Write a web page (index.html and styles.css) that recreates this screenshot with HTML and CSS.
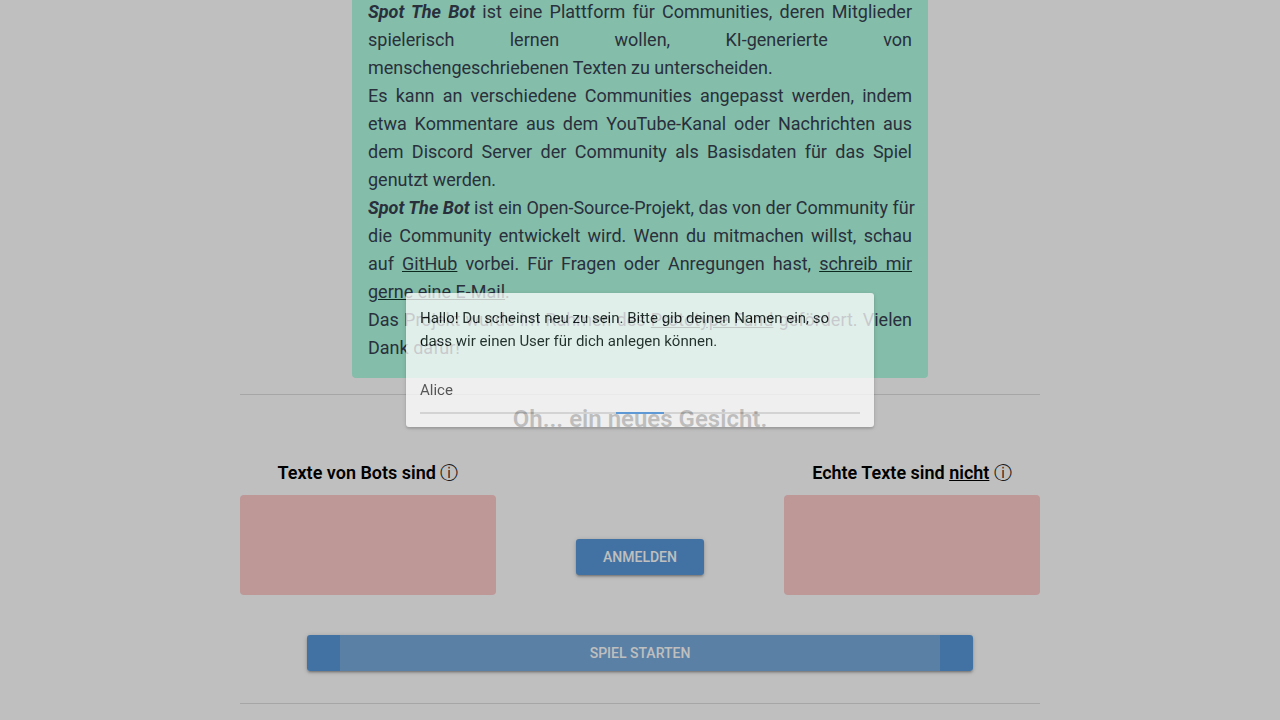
FILE: index.html
```html
<!DOCTYPE html>
<html lang="de">
<head>
<meta charset="utf-8">
<title>Spot The Bot</title>
<link rel="stylesheet" href="styles.css">
</head>
<body>
<main class="page">
  <section class="intro">
    <p><strong class="brand">Spot The Bot</strong> ist eine Plattform für Communities, deren Mitglieder spielerisch lernen wollen, KI-generierte von menschengeschriebenen Texten zu unterscheiden.</p>
    <p>Es kann an verschiedene Communities angepasst werden, indem etwa Kommentare aus dem YouTube-Kanal oder Nachrichten aus dem Discord Server der Community als Basisdaten für das Spiel genutzt werden.</p>
    <p><span class="lead"><strong class="brand">Spot The Bot</strong> ist ein Open-Source-Projekt, das von der Community für</span> die Community entwickelt wird. Wenn du mitmachen willst, schau auf <a href="#">GitHub</a> vorbei. Für Fragen oder Anregungen hast, <a href="#">schreib mir gerne eine E-Mail</a>.</p>
    <p>Das Projekt wurde im Rahmen des <a href="#">Prototype Fund</a> gefördert. Vielen Dank dafür!</p>
  </section>
  <hr class="rule">
  <h1 class="greeting">Oh... ein neues Gesicht.</h1>
  <div class="columns">
    <section class="traits">
      <h2 class="traits-title">Texte von Bots sind <span class="info">ⓘ</span></h2>
      <div class="traits-box"></div>
    </section>
    <button class="button login" type="button">Anmelden</button>
    <section class="traits">
      <h2 class="traits-title">Echte Texte sind <u>nicht</u> <span class="info">ⓘ</span></h2>
      <div class="traits-box"></div>
    </section>
  </div>
  <button class="button start" type="button"><span>Spiel starten</span></button>
  <hr class="rule">
</main>
<div class="backdrop">
  <div class="dialog" role="dialog" aria-modal="true">
    <label class="dialog-text" for="name">Hallo! Du scheinst neu zu sein. Bitte gib deinen Namen ein, so dass wir einen User für dich anlegen können.</label>
    <div class="field"><input class="name" id="name" type="text" value="Alice"></div>
  </div>
</div>
</body>
</html>
```
FILE: styles.css
```css
* {
  box-sizing: border-box;
}

body {
  margin: 0;
  height: 100vh;
  overflow: hidden;
  background: #fff;
  color: #000;
  font-family: Roboto, sans-serif;
}

p, h1, h2 {
  margin: 0;
}

.page {
  display: flex;
  flex-direction: column;
  max-width: 800px;
  margin: 0 auto;
}

.intro {
  align-self: center;
  width: 100%;
  max-width: 576px;
  margin-top: -18px;
  padding: 16px;
  border-radius: 4px;
  background: #b0fde2;
  color: #374151;
  font-size: 18px;
  line-height: 28px;
  text-align: justify;
}

.intro a {
  color: inherit;
  text-decoration: underline;
  text-decoration-color: #12372a;
}

.brand {
  font-style: italic;
  font-weight: 700;
}

.lead {
  display: block;
  white-space: nowrap;
}

.rule {
  width: 100%;
  height: 1px;
  margin: 16px 0 0;
  border: 0;
  background: #dedede;
}

.greeting {
  margin-top: 8px;
  font-size: 24px;
  font-weight: 600;
  line-height: 32px;
  text-align: center;
}

.columns {
  display: flex;
  align-items: flex-end;
  justify-content: space-between;
  margin-top: 24px;
}

.traits {
  width: 256px;
}

.traits-title {
  font-size: 18px;
  font-weight: 600;
  line-height: 28px;
  text-align: center;
}

.info {
  font-weight: 300;
  color: #222;
}

.traits-box {
  height: 100px;
  margin-top: 8px;
  border-radius: 4px;
  background: #fecaca;
}

.button {
  height: 36px;
  padding: 0 16px;
  border: 0;
  border-radius: 3px;
  background: #5899da;
  box-shadow: 0 1px 5px rgba(0, 0, 0, .2), 0 2px 2px rgba(0, 0, 0, .14), 0 3px 1px -2px rgba(0, 0, 0, .12);
  color: #fff;
  font: 500 14px/24px Roboto, sans-serif;
  text-transform: uppercase;
}

.login {
  width: 128px;
  margin-bottom: 20px;
}

.start {
  align-self: center;
  width: 83.25%;
  margin: 40px 0 16px;
  background: linear-gradient(90deg, #5899da 5%, #79abdd 5%, #79abdd 95%, #5899da 95%);
}

.backdrop {
  position: fixed;
  inset: 0;
  display: flex;
  align-items: center;
  justify-content: center;
  background: rgba(0, 0, 0, .25);
}

.dialog {
  width: 468px;
  max-width: 90%;
  padding: 14px 14px 13px;
  border-radius: 3px;
  background: #fff;
  box-shadow: 0 1px 5px rgba(0, 0, 0, .2), 0 2px 2px rgba(0, 0, 0, .14);
  opacity: .74;
}

.dialog-text {
  display: block;
  font-size: 15px;
  line-height: 23px;
}

.field {
  margin-top: 20px;
  border-bottom: 2px solid;
  border-image: linear-gradient(90deg, #dadada 44.5%, #3c8cdc 44.5%, #3c8cdc 55.5%, #dadada 55.5%) 1;
}

.name {
  display: block;
  width: 100%;
  height: 39px;
  padding: 0 0 6px;
  border: 0;
  outline: 0;
  background: transparent;
  color: #333;
  font: 15px/24px Roboto, sans-serif;
}
```
